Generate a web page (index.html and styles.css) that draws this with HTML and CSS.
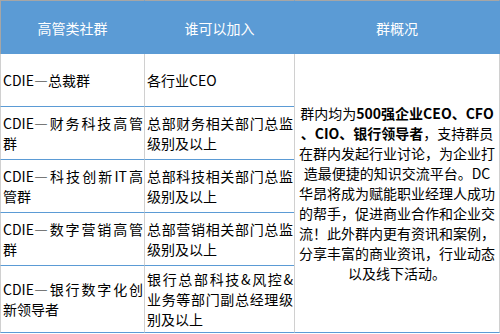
FILE: index.html
```html
<!DOCTYPE html>
<html lang="zh-CN">
<head>
<meta charset="utf-8">
<title>高管类社群</title>
<link rel="stylesheet" href="styles.css">
</head>
<body>
<table class="groups">
  <thead>
    <tr>
      <th class="c1">高管类社群</th>
      <th class="c2">谁可以加入</th>
      <th class="c3">群概况</th>
    </tr>
  </thead>
  <tbody>
    <tr class="r">
      <td class="c1">CDIE—总裁群</td>
      <td class="c2">各行业CEO</td>
      <td class="c3 desc" rowspan="5">群内均为<b>500强企业CEO、CFO</b><br><b>、CIO、银行领导者</b>，支持群员<br>在群内发起行业讨论，为企业打<br>造最便捷的知识交流平台。DC<br>华昂将成为赋能职业经理人成功<br>的帮手，促进商业合作和企业交<br>流！此外群内更有资讯和案例，<br>分享丰富的商业资讯，行业动态<br>以及线下活动。</td>
    </tr>
    <tr class="r">
      <td class="c1"><span class="jl">CDIE—财务科技高管</span>群</td>
      <td class="c2"><span class="jl">总部财务相关部门总监</span>级别及以上</td>
    </tr>
    <tr class="r">
      <td class="c1"><span class="jl">CDIE—科技创新IT高</span>管群</td>
      <td class="c2"><span class="jl">总部科技相关部门总监</span>级别及以上</td>
    </tr>
    <tr class="r">
      <td class="c1"><span class="jl">CDIE—数字营销高管</span>群</td>
      <td class="c2"><span class="jl">总部营销相关部门总监</span>级别及以上</td>
    </tr>
    <tr class="r last">
      <td class="c1"><span class="jl">CDIE—银行数字化创</span>新领导者</td>
      <td class="c2"><span class="jl">银行总部科技&amp;风控&amp;</span><span class="jl">业务等部门副总经理级</span>别及以上</td>
    </tr>
  </tbody>
</table>
</body>
</html>
```

FILE: styles.css
```css
html, body {
  margin: 0;
  padding: 0;
  background: #ffffff;
}

body {
  font-family: "Noto Sans CJK SC", "Noto Sans", sans-serif;
  font-size: 14px;
  line-height: 20px;
  color: #000000;
}

.groups {
  width: 500px;
  table-layout: fixed;
  border-collapse: separate;
  border-spacing: 0;
}

.groups th,
.groups td {
  box-sizing: border-box;
  padding: 0;
  vertical-align: middle;
}

.groups th {
  height: 54px;
  background: #5b9bd5;
  color: #ffffff;
  font-weight: normal;
  text-align: center;
  border-top: 1px solid #a6a6a6;
  border-left: 1px solid #5b9bd5;
}

.groups th.c1 {
  width: 144px;
  border-left-color: #a6a6a6;
}

.groups th.c2 {
  width: 150px;
}

.groups th.c3 {
  width: 206px;
  border-right: 1px solid #5b9bd5;
}

.groups td {
  height: 53px;
  border-left: 1px solid #d0d0d0;
  border-bottom: 1px solid #5b9bd5;
  text-align: left;
}

.groups tr.last td {
  height: 67px;
}

.groups td.c1 {
  padding: 0 1px 0 2px;
}

.groups td.c2 {
  padding: 0 1px 0 2px;
}

.groups td.desc {
  border-right: 1px solid #d0d0d0;
  text-align: center;
  white-space: nowrap;
  padding: 0 2px;
}

.desc b {
  font-weight: bold;
}

.jl {
  display: block;
  text-align: justify;
  text-align-last: justify;
}
```
